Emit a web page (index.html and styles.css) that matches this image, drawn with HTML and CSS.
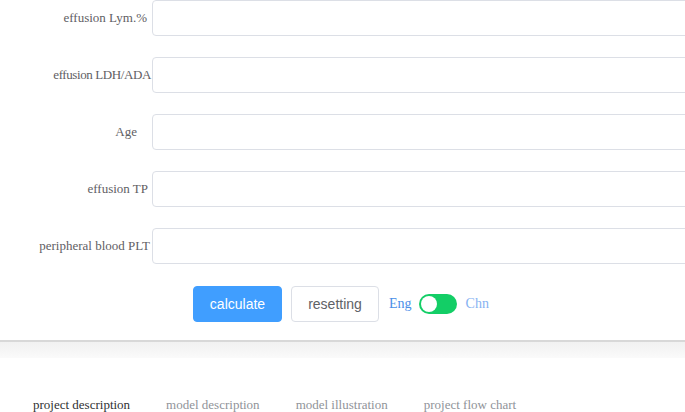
FILE: index.html
```html
<!DOCTYPE html>
<html>
<head>
<meta charset="utf-8">
<link rel="stylesheet" href="styles.css">
</head>
<body>
<div class="page">
  <section class="card">
    <form class="form">
      <div class="row"><label class="label pr-lym">effusion Lym.%</label><div class="input"></div></div>
      <div class="row"><label class="label pr-ldh narrow">effusion LDH/ADA</label><div class="input"></div></div>
      <div class="row"><label class="label pr-age">Age</label><div class="input"></div></div>
      <div class="row"><label class="label pr-tp">effusion TP</label><div class="input"></div></div>
      <div class="row"><label class="label pr-plt">peripheral blood PLT</label><div class="input"></div></div>
      <div class="actions">
        <button type="button" class="btn btn-primary">calculate</button>
        <button type="button" class="btn btn-default">resetting</button>
        <span class="lang lang-eng">Eng</span>
        <span class="switch"><span class="knob"></span></span>
        <span class="lang lang-chn">Chn</span>
      </div>
    </form>
  </section>
  <div class="band"></div>
  <nav class="tabs">
    <span class="tab active">project description</span>
    <span class="tab">model description</span>
    <span class="tab">model illustration</span>
    <span class="tab">project flow chart</span>
  </nav>
</div>
</body>
</html>
```
FILE: styles.css
```css
html, body {
  margin: 0;
  padding: 0;
  background: #fff;
  overflow: hidden;
}
.page {
  width: 685px;
  height: 412px;
  overflow: hidden;
  font-family: "Liberation Serif", "Times New Roman", serif;
}
.card {
  border-bottom: 2px solid #d8d8d8;
  padding-bottom: 18px;
}
.form {
  display: flex;
  flex-direction: column;
}
.row {
  display: flex;
  align-items: center;
  height: 36px;
  margin-bottom: 21px;
}
.label {
  width: 152px;
  box-sizing: border-box;
  text-align: right;
  font-size: 13px;
  color: #5f6064;
  white-space: nowrap;
  line-height: 36px;
}
.narrow { letter-spacing: -0.4px; }
.pr-lym { padding-right: 5px; }
.pr-ldh { padding-right: 1px; }
.pr-age { padding-right: 15px; }
.pr-tp { padding-right: 4px; }
.pr-plt { padding-right: 2px; }
.input {
  flex: 1;
  height: 36px;
  box-sizing: border-box;
  border: 1px solid #dcdfe6;
  border-radius: 4px;
  margin-right: -20px;
  background: #fff;
}
.actions {
  display: flex;
  align-items: center;
  padding-left: 193px;
  margin-top: 1px;
  height: 36px;
}
.btn {
  height: 36px;
  box-sizing: border-box;
  border-radius: 4px;
  font-family: "Liberation Sans", Arial, sans-serif;
  font-size: 14px;
  padding: 0;
  cursor: pointer;
}
.btn-primary {
  width: 89px;
  background: #409eff;
  border: 1px solid #409eff;
  color: #fff;
}
.btn-default {
  width: 88px;
  margin-left: 9px;
  background: #fff;
  border: 1px solid #dcdfe6;
  color: #606266;
}
.lang {
  font-size: 14px;
  line-height: 20px;
}
.lang-eng {
  margin-left: 10px;
  color: #4a8fe8;
}
.lang-chn {
  margin-left: 9px;
  color: #86b2f2;
}
.switch {
  margin-left: 7px;
  width: 38px;
  height: 20px;
  border-radius: 10px;
  background: #13ce66;
  display: flex;
  align-items: center;
  padding-left: 2px;
  box-sizing: border-box;
}
.knob {
  width: 16px;
  height: 16px;
  border-radius: 50%;
  background: #fff;
}
.band {
  height: 16px;
  background: linear-gradient(#f1f1f1, #fafafa);
}
.tabs {
  display: flex;
  padding-left: 33px;
  margin-top: 39px;
  font-size: 13px;
  line-height: 16px;
}
.tab {
  color: #909399;
  margin-right: 36px;
  white-space: nowrap;
}
.tab.active {
  color: #303133;
}
```
